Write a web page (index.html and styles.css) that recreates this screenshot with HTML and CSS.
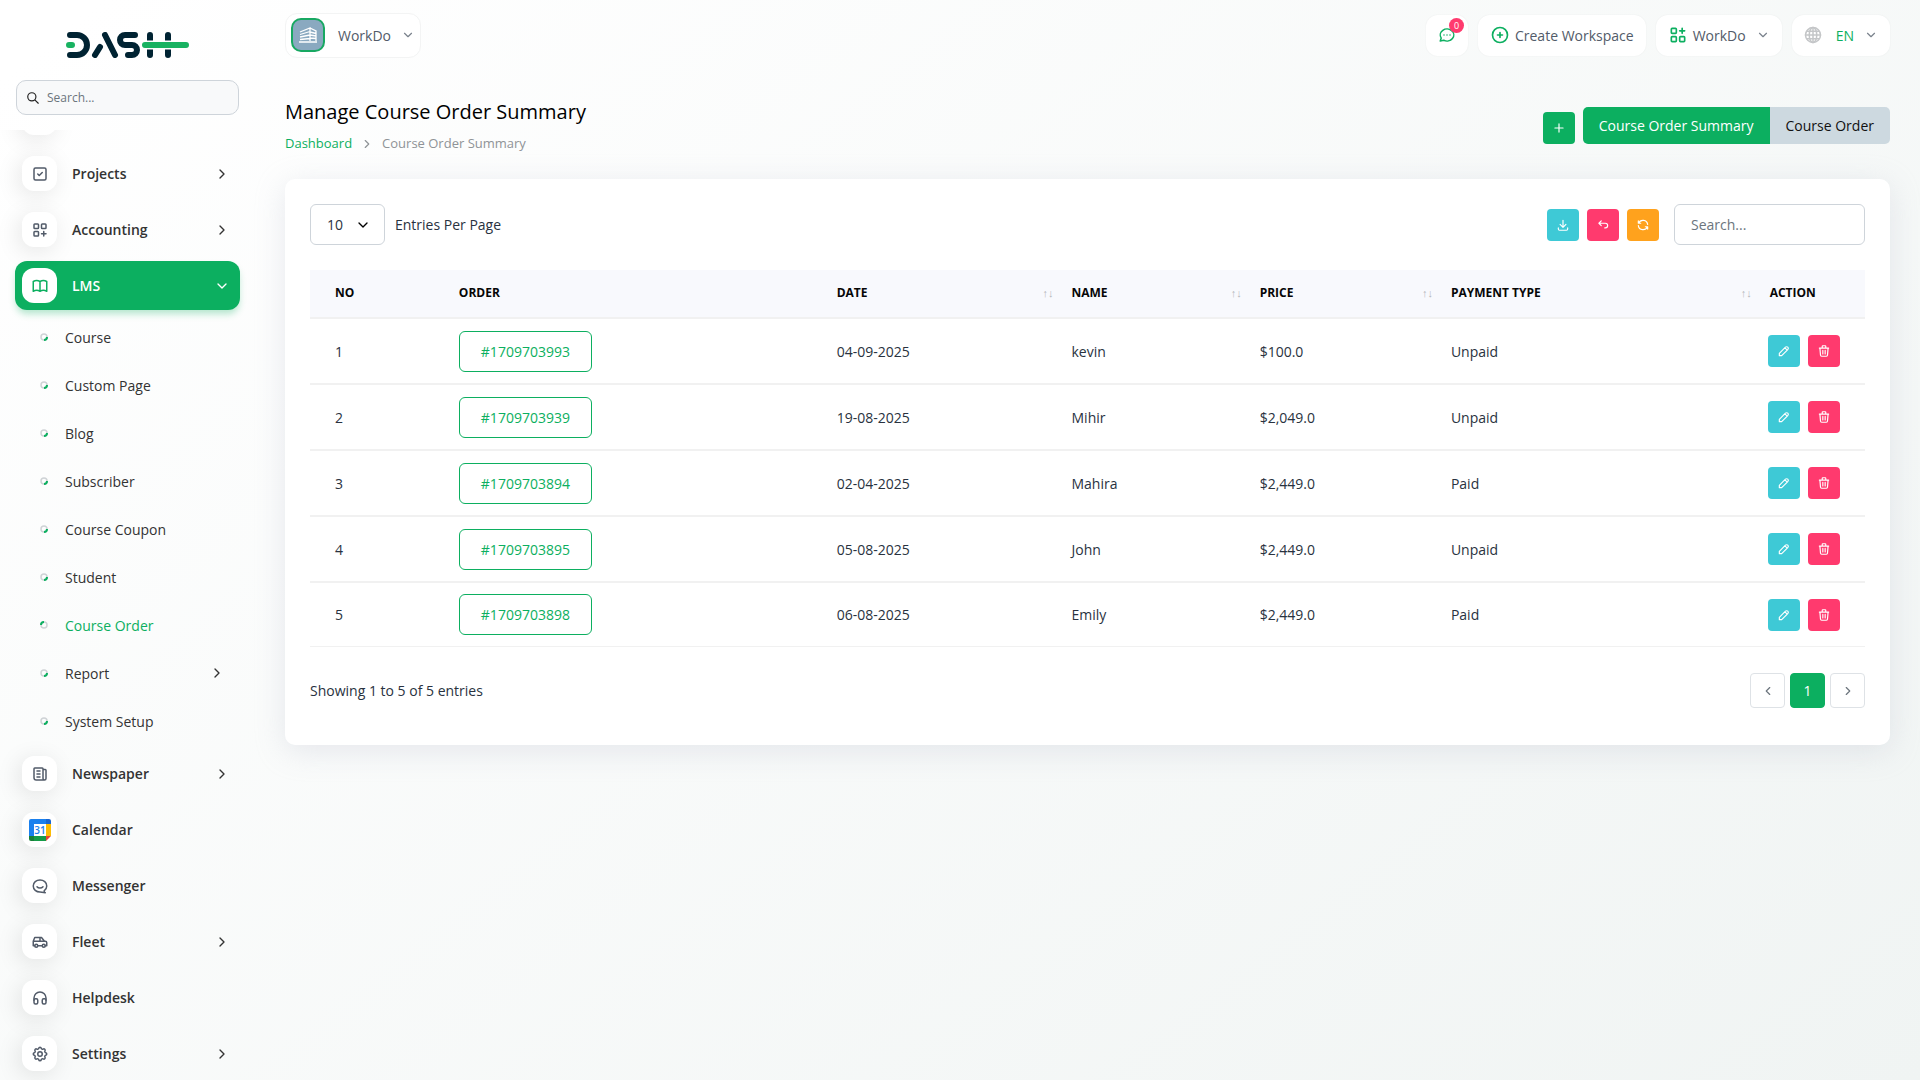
FILE: index.html
```html
<!DOCTYPE html>
<html lang="en">
<head>
    <meta charset="UTF-8">
    <meta name="viewport" content="width=device-width, initial-scale=1.0">
    <title>Manage Course Order Summary</title>
    <link rel="stylesheet" href="styles.css">
</head>
<body>
    <!-- Shared icons -->
    <svg class="sprite" aria-hidden="true">
        <symbol id="i-right" viewBox="0 0 24 24"><path d="M9 6l6 6l-6 6"/></symbol>
        <symbol id="i-left" viewBox="0 0 24 24"><path d="M15 6l-6 6l6 6"/></symbol>
        <symbol id="i-down" viewBox="0 0 24 24"><path d="M6 9l6 6l6-6"/></symbol>
        <symbol id="i-pencil" viewBox="0 0 24 24"><path d="M4 20h4L18.500 9.500a1.500 1.500 0 0 0-4-4L4 16v4M13.500 6.500l4 4"/></symbol>
        <symbol id="i-trash" viewBox="0 0 24 24"><path d="M4 7h16M10 11v6M14 11v6M5 7l1 12a2 2 0 0 0 2 2h8a2 2 0 0 0 2-2l1-12M9 7V4a1 1 0 0 1 1-1h4a1 1 0 0 1 1 1v3"/></symbol>
        <symbol id="i-bullet" viewBox="0 0 8 8"><circle cx="4" cy="4" r="3" stroke="#cfd3d6" stroke-width="1.500"/><path d="M7 4a3 3 0 0 1-3 3" stroke="#0caf60" stroke-width="2"/></symbol>
    </svg>

    <aside class="sidebar">
        <a href="#" class="logo" aria-label="Dash">
            <svg viewBox="0 0 123 26" width="123" height="26" fill="none" stroke="#002332" stroke-width="6" stroke-linecap="round" stroke-linejoin="round">
                <path d="M4 3h7a10 10 0 0 1 0 20H4"/>
                <path d="M29 23l5-8M39 3l10 20"/>
                <path d="M69 3H59a5 5 0 0 0 0 10h7a5 5 0 0 1 0 10H62"/>
                <path d="M84 3v20M102 3v20"/>
                <path d="M79 13h41" stroke="#fff" stroke-width="9" stroke-linecap="butt"/>
                <path d="M3 13h3M79 13h41" stroke="#18b261"/>
            </svg>
        </a>
        <label class="side-search">
            <svg class="icon" viewBox="0 0 24 24"><circle cx="10" cy="10" r="7"/><path d="M15.500 15.500L21 21"/></svg>
            <input type="search" placeholder="Search..." aria-label="Search menu">
        </label>
        <nav class="side-nav">
            <ul class="menu">
                <li class="item">
                    <a href="#" aria-label="Previous module"><span class="icon-box"></span></a>
                </li>
                <li class="item">
                    <a href="#">
                        <span class="icon-box"><svg class="icon" viewBox="0 0 24 24"><rect x="4" y="4" width="16" height="16" rx="2"/><path d="M9 12l2 2l4-4"/></svg></span>
                        <span class="label">Projects</span>
                        <svg class="icon arrow"><use href="#i-right"/></svg>
                    </a>
                </li>
                <li class="item">
                    <a href="#">
                        <span class="icon-box"><svg class="icon" viewBox="0 0 24 24"><rect x="4" y="4" width="6" height="6" rx="1"/><rect x="14" y="4" width="6" height="6" rx="1"/><rect x="4" y="14" width="6" height="6" rx="1"/><path d="M14 17h6M17 14v6"/></svg></span>
                        <span class="label">Accounting</span>
                        <svg class="icon arrow"><use href="#i-right"/></svg>
                    </a>
                </li>
                <li class="item active">
                    <a href="#">
                        <span class="icon-box"><svg class="icon" viewBox="0 0 24 24"><path d="M3 19a9 9 0 0 1 9 0a9 9 0 0 1 9 0M3 6a9 9 0 0 1 9 0a9 9 0 0 1 9 0M3 6v13M12 6v13M21 6v13"/></svg></span>
                        <span class="label">LMS</span>
                        <svg class="icon arrow"><use href="#i-down"/></svg>
                    </a>
                </li>
                <li>
                    <ul class="submenu">
                        <li><a href="#"><svg class="bullet"><use href="#i-bullet"/></svg>Course</a></li>
                        <li><a href="#"><svg class="bullet"><use href="#i-bullet"/></svg>Custom Page</a></li>
                        <li><a href="#"><svg class="bullet"><use href="#i-bullet"/></svg>Blog</a></li>
                        <li><a href="#"><svg class="bullet"><use href="#i-bullet"/></svg>Subscriber</a></li>
                        <li><a href="#"><svg class="bullet"><use href="#i-bullet"/></svg>Course Coupon</a></li>
                        <li><a href="#"><svg class="bullet"><use href="#i-bullet"/></svg>Student</a></li>
                        <li class="current"><a href="#"><svg class="bullet"><use href="#i-bullet"/></svg>Course Order</a></li>
                        <li><a href="#"><svg class="bullet"><use href="#i-bullet"/></svg>Report<svg class="icon arrow"><use href="#i-right"/></svg></a></li>
                        <li><a href="#"><svg class="bullet"><use href="#i-bullet"/></svg>System Setup</a></li>
                    </ul>
                </li>
                <li class="item">
                    <a href="#">
                        <span class="icon-box"><svg class="icon" viewBox="0 0 24 24"><path d="M16 6h3a1 1 0 0 1 1 1v11a2 2 0 0 1-4 0V5a1 1 0 0 0-1-1H5a1 1 0 0 0-1 1v12a3 3 0 0 0 3 3h11M8 8h4M8 12h4M8 16h4"/></svg></span>
                        <span class="label">Newspaper</span>
                        <svg class="icon arrow"><use href="#i-right"/></svg>
                    </a>
                </li>
                <li class="item">
                    <a href="#">
                        <span class="icon-box">
                            <svg viewBox="0 0 22 22" width="22" height="22">
                                <path d="M2 0h15v5H5v12H0V2a2 2 0 0 1 2-2z" fill="#1a80ee"/>
                                <path d="M17 0h3a2 2 0 0 1 2 2v3h-5z" fill="#1967d2"/>
                                <path d="M17 5h5v12h-5z" fill="#fbbc04"/>
                                <path d="M5 17h12v5H5z" fill="#159b48"/>
                                <path d="M0 17h5v5H2a2 2 0 0 1-2-2z" fill="#188038"/>
                                <path d="M17 17h5l-5 5z" fill="#ea4335"/>
                                <path d="M5 5h12v12H5z" fill="#fff"/>
                                <text x="11" y="15" text-anchor="middle" class="cal-day">31</text>
                            </svg>
                        </span>
                        <span class="label">Calendar</span>
                    </a>
                </li>
                <li class="item">
                    <a href="#">
                        <span class="icon-box"><svg class="icon" viewBox="0 0 24 24"><path d="M17.500 18.500C19.700 17 21 14.700 21 12c0-4.700-4-8-9-8s-9 3.300-9 8s4 8 9 8c2 0 3.500 1 7 1c-1-.600-1.500-1.500-1.500-2.500M8 13c2 2.400 6 2.400 8 0"/></svg></span>
                        <span class="label">Messenger</span>
                    </a>
                </li>
                <li class="item">
                    <a href="#">
                        <span class="icon-box"><svg class="icon" viewBox="0 0 24 24"><circle cx="7" cy="17" r="2"/><circle cx="17" cy="17" r="2"/><path d="M5 17H3v-6l2-5h9l4 5h1a2 2 0 0 1 2 2v4h-2M15 17H9M3 11h15M12 11V6"/></svg></span>
                        <span class="label">Fleet</span>
                        <svg class="icon arrow"><use href="#i-right"/></svg>
                    </a>
                </li>
                <li class="item">
                    <a href="#">
                        <span class="icon-box"><svg class="icon" viewBox="0 0 24 24"><rect x="4" y="13" width="5" height="7" rx="2"/><rect x="15" y="13" width="5" height="7" rx="2"/><path d="M4 15v-3a8 8 0 0 1 16 0v3"/></svg></span>
                        <span class="label">Helpdesk</span>
                    </a>
                </li>
                <li class="item">
                    <a href="#">
                        <span class="icon-box"><svg class="icon" viewBox="0 0 24 24"><path d="M10.325 4.317c.426-1.756 2.924-1.756 3.350 0a1.724 1.724 0 0 0 2.573 1.066c1.543-.940 3.310.826 2.370 2.370a1.724 1.724 0 0 0 1.065 2.572c1.756.426 1.756 2.924 0 3.350a1.724 1.724 0 0 0-1.066 2.573c.940 1.543-.826 3.310-2.370 2.370a1.724 1.724 0 0 0-2.572 1.065c-.426 1.756-2.924 1.756-3.350 0a1.724 1.724 0 0 0-2.573-1.066c-1.543.940-3.310-.826-2.370-2.370a1.724 1.724 0 0 0-1.065-2.572c-1.756-.426-1.756-2.924 0-3.350a1.724 1.724 0 0 0 1.066-2.573c-.940-1.543.826-3.310 2.370-2.370c1 .608 2.296.070 2.572-1.065z"/><circle cx="12" cy="12" r="3"/></svg></span>
                        <span class="label">Settings</span>
                        <svg class="icon arrow"><use href="#i-right"/></svg>
                    </a>
                </li>
            </ul>
        </nav>
    </aside>

    <div class="page">
        <header class="topbar">
            <button type="button" class="pill profile">
                <span class="avatar">
                    <svg viewBox="0 0 18 16" width="18" height="16" fill="none" stroke="#fff" stroke-width="1.300"><path d="M1 5l10-4v13M1 7.500l10-3M1 10l10-2M1 12.500l10-1M11 1l6 3v10M11 5l6 1.500M11 8l6 1M11 11l6 .500M0 15h18"/></svg>
                </span>
                <span>WorkDo</span>
                <svg class="icon caret"><use href="#i-down"/></svg>
            </button>
            <div class="top-actions">
                <button type="button" class="pill chat" aria-label="Messages">
                    <svg class="icon" viewBox="0 0 24 24"><path d="M3 20l1.300-3.900C1.976 12.663 2.874 8.228 6.400 5.726s8.590-2.296 11.845.480c3.255 2.777 3.695 7.266 1.029 10.501S11.659 20.922 7.700 19L3 20M12 12v.010M8 12v.010M16 12v.010"/></svg>
                    <span class="badge">0</span>
                </button>
                <button type="button" class="pill create">
                    <svg class="icon" viewBox="0 0 24 24"><circle cx="12" cy="12" r="9"/><path d="M9 12h6M12 9v6"/></svg>
                    <span>Create Workspace</span>
                </button>
                <button type="button" class="pill workspace">
                    <svg class="icon" viewBox="0 0 24 24"><rect x="4" y="4" width="6" height="6" rx="1"/><rect x="4" y="14" width="6" height="6" rx="1"/><rect x="14" y="14" width="6" height="6" rx="1"/><path d="M14 7h6M17 4v6"/></svg>
                    <span>WorkDo</span>
                    <svg class="icon caret"><use href="#i-down"/></svg>
                </button>
                <button type="button" class="pill lang">
                    <svg class="icon globe" viewBox="0 0 24 24"><circle cx="12" cy="12" r="10"/><ellipse cx="12" cy="12" rx="5" ry="10"/><path d="M12 2v20M2 12h20M4 7h16M4 17h16"/></svg>
                    <span>EN</span>
                    <svg class="icon caret"><use href="#i-down"/></svg>
                </button>
            </div>
        </header>

        <main>
            <div class="page-header">
                <div>
                    <h1>Manage Course Order Summary</h1>
                    <nav class="breadcrumb" aria-label="Breadcrumb">
                        <a href="#">Dashboard</a>
                        <svg class="icon"><use href="#i-right"/></svg>
                        <span>Course Order Summary</span>
                    </nav>
                </div>
                <div class="page-actions">
                    <button type="button" class="btn-icon green" aria-label="Create"><svg class="icon" viewBox="0 0 24 24"><path d="M12 5v14M5 12h14"/></svg></button>
                    <div class="btn-group">
                        <a href="#" class="on">Course Order Summary</a>
                        <a href="#">Course Order</a>
                    </div>
                </div>
            </div>

            <section class="card">
                <div class="table-top">
                    <div class="entries">
                        <div class="select-wrap">
                            <select id="perPage">
                                <option>10</option>
                                <option>25</option>
                                <option>50</option>
                            </select>
                            <svg class="icon"><use href="#i-down"/></svg>
                        </div>
                        <label for="perPage">Entries Per Page</label>
                    </div>
                    <div class="tools">
                        <button type="button" class="btn-icon teal" aria-label="Export"><svg class="icon" viewBox="0 0 24 24"><path d="M4 17v2a2 2 0 0 0 2 2h12a2 2 0 0 0 2-2v-2M7 11l5 5l5-5M12 4v12"/></svg></button>
                        <button type="button" class="btn-icon pink" aria-label="Reset"><svg class="icon" viewBox="0 0 24 24"><path d="M9 13L5 9l4-4M5 9h11a4 4 0 0 1 0 8h-1"/></svg></button>
                        <button type="button" class="btn-icon orange" aria-label="Reload"><svg class="icon" viewBox="0 0 24 24"><path d="M20 11A8.100 8.100 0 0 0 4.500 9M4 5v4h4M4 13a8.100 8.100 0 0 0 15.500 2M20 19v-4h-4"/></svg></button>
                        <input type="search" class="table-search" placeholder="Search..." aria-label="Search orders">
                    </div>
                </div>

                <table>
                    <thead>
                        <tr>
                            <th class="c-no">No</th>
                            <th class="c-order">Order</th>
                            <th class="c-date sort">Date</th>
                            <th class="c-name sort">Name</th>
                            <th class="c-price sort">Price</th>
                            <th class="c-type sort">Payment Type</th>
                            <th class="c-action">Action</th>
                        </tr>
                    </thead>
                    <tbody>
                        <tr>
                            <td>1</td><td><a href="#" class="order">#1709703993</a></td><td>04-09-2025</td><td>kevin</td><td>$100.0</td><td>Unpaid</td>
                            <td><div class="row-actions"><button type="button" class="btn-icon teal" aria-label="Edit"><svg class="icon"><use href="#i-pencil"/></svg></button><button type="button" class="btn-icon pink" aria-label="Delete"><svg class="icon"><use href="#i-trash"/></svg></button></div></td>
                        </tr>
                        <tr>
                            <td>2</td><td><a href="#" class="order">#1709703939</a></td><td>19-08-2025</td><td>Mihir</td><td>$2,049.0</td><td>Unpaid</td>
                            <td><div class="row-actions"><button type="button" class="btn-icon teal" aria-label="Edit"><svg class="icon"><use href="#i-pencil"/></svg></button><button type="button" class="btn-icon pink" aria-label="Delete"><svg class="icon"><use href="#i-trash"/></svg></button></div></td>
                        </tr>
                        <tr>
                            <td>3</td><td><a href="#" class="order">#1709703894</a></td><td>02-04-2025</td><td>Mahira</td><td>$2,449.0</td><td>Paid</td>
                            <td><div class="row-actions"><button type="button" class="btn-icon teal" aria-label="Edit"><svg class="icon"><use href="#i-pencil"/></svg></button><button type="button" class="btn-icon pink" aria-label="Delete"><svg class="icon"><use href="#i-trash"/></svg></button></div></td>
                        </tr>
                        <tr>
                            <td>4</td><td><a href="#" class="order">#1709703895</a></td><td>05-08-2025</td><td>John</td><td>$2,449.0</td><td>Unpaid</td>
                            <td><div class="row-actions"><button type="button" class="btn-icon teal" aria-label="Edit"><svg class="icon"><use href="#i-pencil"/></svg></button><button type="button" class="btn-icon pink" aria-label="Delete"><svg class="icon"><use href="#i-trash"/></svg></button></div></td>
                        </tr>
                        <tr>
                            <td>5</td><td><a href="#" class="order">#1709703898</a></td><td>06-08-2025</td><td>Emily</td><td>$2,449.0</td><td>Paid</td>
                            <td><div class="row-actions"><button type="button" class="btn-icon teal" aria-label="Edit"><svg class="icon"><use href="#i-pencil"/></svg></button><button type="button" class="btn-icon pink" aria-label="Delete"><svg class="icon"><use href="#i-trash"/></svg></button></div></td>
                        </tr>
                    </tbody>
                </table>

                <div class="table-bottom">
                    <span>Showing 1 to 5 of 5 entries</span>
                    <div class="pagination">
                        <button type="button" aria-label="Previous page"><svg class="icon"><use href="#i-left"/></svg></button>
                        <button type="button" class="on">1</button>
                        <button type="button" aria-label="Next page"><svg class="icon"><use href="#i-right"/></svg></button>
                    </div>
                </div>
            </section>
        </main>
    </div>
</body>
</html>
```
FILE: styles.css
```css
:root {
    --green: #0caf60;
    --teal: #3ec9d6;
    --pink: #ff3a6e;
    --orange: #ffa21d;
    --text: #293240;
    --muted: #6c757d;
    --border: #ced4da;
}
*, *::before, *::after { box-sizing: border-box; margin: 0; padding: 0; }
body {
    display: flex;
    min-height: 100vh;
    font-family: "Open Sans", "Noto Sans", sans-serif;
    font-size: 14px;
    line-height: 21px;
    color: var(--text);
    background: linear-gradient(141.55deg, #fff 3%, #f0f4f3 100%) fixed;
}
a { color: inherit; text-decoration: none; }
ul { list-style: none; }
button, input, select { font: inherit; color: inherit; }
button { border: 0; cursor: pointer; }
.sprite { display: none; }
.icon { width: 18px; height: 18px; flex: none; fill: none; stroke: currentColor; stroke-width: 2; stroke-linecap: round; stroke-linejoin: round; }

/* Sidebar */
.sidebar { width: 255px; height: 100vh; flex: none; display: flex; flex-direction: column; position: sticky; top: 0; }
.logo { display: flex; justify-content: center; padding: 32px 0 22px; }
.side-search { display: flex; align-items: center; gap: 7px; height: 35px; margin: 0 16px 15px; padding: 0 9px; border: 1px solid var(--border); border-radius: 10px; background: #f8f9fa; }
.side-search .icon { width: 14px; height: 14px; color: #222; }
.side-search input { width: 100%; border: 0; outline: 0; background: none; font-size: 12px; }
.side-nav { flex: 1; min-height: 0; overflow: hidden; }
.menu { margin-top: -41px; padding: 0 15px; }
.item { padding: 4px 0 3px; }
.item a { display: flex; align-items: center; height: 49px; padding: 0 10px 0 7px; border-radius: 12px; font-weight: 600; color: #333; }
.icon-box { display: flex; align-items: center; justify-content: center; width: 35px; height: 35px; margin-right: 15px; border-radius: 12px; background: #fff; color: #525b69; box-shadow: -3px 4px 23px rgba(0, 0, 0, 0.1); }
.arrow { width: 16px; height: 16px; margin-left: auto; }
.item.active a { background: var(--green); color: #fff; box-shadow: 0 5px 7px -1px rgba(12, 175, 96, 0.3); }
.item.active .icon-box { color: var(--green); box-shadow: none; }
.cal-day { font-size: 10px; font-weight: 600; fill: #1a80ee; }
.submenu a { display: flex; align-items: center; height: 48px; padding: 0 15px 0 25px; color: #333; }
.bullet { width: 8px; height: 8px; margin-right: 17px; fill: none; }
.current a { color: var(--green); }
.current .bullet { transform: rotate(180deg); }

/* Top bar */
.page { flex: 1; min-width: 0; padding: 0 30px; }
.topbar { display: flex; align-items: center; justify-content: space-between; height: 70px; }
.top-actions { display: flex; gap: 10px; }
.pill { display: flex; align-items: center; height: 41px; padding: 0 12px; border-radius: 12px; background: #fff; color: #525b69; box-shadow: 0 0 2px rgba(0, 0, 0, 0.06); }
.pill .icon { color: var(--green); }
.pill .caret { width: 14px; height: 14px; margin-left: 10px; color: #7a828c; }
.profile { height: 45px; padding: 0 5px; border: 1px solid #f3f4f4; box-shadow: none; }
.avatar { display: flex; align-items: center; justify-content: center; width: 34px; height: 34px; margin-right: 13px; border: 2px solid #18a862; border-radius: 10px; background: #8aa9c0; }
.chat { position: relative; }
.badge { position: absolute; top: 3px; right: 4px; width: 15px; height: 15px; border-radius: 50%; background: var(--pink); color: #fff; font-size: 9px; line-height: 15px; text-align: center; }
.create .icon, .workspace .icon:first-child { width: 20px; height: 20px; margin-right: 5px; }
.lang { color: var(--green); }
.lang .globe { margin-right: 14px; color: #c4c6c8; }

/* Page header */
.page-header { display: flex; align-items: center; justify-content: space-between; padding: 28px 0 26px; }
h1 { font-size: 20px; line-height: 28px; font-weight: 500; color: #000; }
.breadcrumb { display: flex; align-items: center; margin-top: 8px; font-size: 13px; line-height: 19px; color: #8f9397; }
.breadcrumb a { color: var(--green); }
.breadcrumb .icon { width: 14px; height: 14px; margin: 0 8px; }
.page-actions { display: flex; align-items: flex-end; gap: 8px; }
.btn-icon { display: inline-flex; align-items: center; justify-content: center; width: 32px; height: 32px; border-radius: 4px; color: #fff; }
.btn-icon .icon { width: 14px; height: 14px; }
.green { background: var(--green); }
.teal { background: var(--teal); }
.pink { background: var(--pink); }
.orange { background: var(--orange); }
.btn-group { display: flex; border-radius: 5px; overflow: hidden; }
.btn-group a { padding: 8px 16px; background: #cdd9e0; color: #111; }
.btn-group .on { background: var(--green); color: #fff; }

/* Table card */
.card { padding: 25px 25px 37px; border-radius: 10px; background: #fff; box-shadow: 0 6px 30px rgba(182, 186, 203, 0.3); }
.table-top, .table-bottom { display: flex; align-items: center; justify-content: space-between; }
.entries { display: flex; align-items: center; gap: 10px; }
.select-wrap { position: relative; width: 75px; }
.select-wrap select { width: 100%; height: 41px; padding: 0 16px; border: 1px solid var(--border); border-radius: 6px; background: #fff; appearance: none; }
.select-wrap .icon { position: absolute; top: 13px; right: 14px; width: 16px; height: 16px; color: #000; pointer-events: none; }
.tools { display: flex; align-items: center; gap: 8px; }
.table-search { width: 191px; height: 41px; margin-left: 7px; padding: 0 16px; border: 1px solid var(--border); border-radius: 6px; background: #fff; }
::placeholder { color: var(--muted); }
table { width: 100%; margin-top: 25px; border-spacing: 0; table-layout: fixed; }
th, td { padding: 0 12px; border-bottom: 2px solid #f1f1f1; text-align: left; }
th:first-child, td:first-child { padding-left: 25px; }
td:last-child { padding-left: 10px; }
th { height: 49px; padding-bottom: 2px; background: #f8f9fd; font-size: 12px; font-weight: 700; text-transform: uppercase; color: #060606; }
td { height: 66px; }
tr:last-child td { height: 64px; border-bottom-width: 1px; }
.c-no { width: 8.8%; }
.c-order { width: 24.3%; }
.c-date { width: 15.1%; }
.c-name { width: 12.1%; }
.c-price { width: 12.3%; }
.c-type { width: 20.5%; }
.c-action { width: 6.9%; }
.sort::after { content: "↑↓"; float: right; margin-right: -6px; font-size: 11px; font-weight: 400; color: #b4b7bb; }
.order { display: inline-block; padding: 9px 21px; border: 1px solid var(--green); border-radius: 6px; color: var(--green); }
.row-actions { display: flex; gap: 8px; }
.table-bottom { margin-top: 26px; }
.pagination { display: flex; gap: 5px; }
.pagination button { display: flex; align-items: center; justify-content: center; width: 35px; height: 35px; border: 1px solid #dee2e6; border-radius: 4px; background: #fff; color: var(--muted); }
.pagination .icon { width: 14px; height: 14px; }
.pagination .on { border-color: var(--green); background: var(--green); color: #fff; }
```
